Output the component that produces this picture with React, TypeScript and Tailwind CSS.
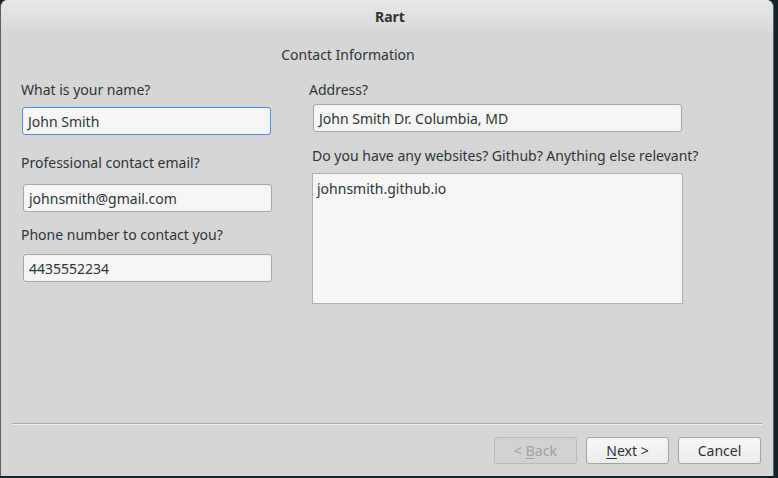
import React from "react"

const font = { fontFamily: '"Noto Sans", "DejaVu Sans", sans-serif' }

function Field({ value, focused, className }: { value: string; focused?: boolean; className: string }) {
  return (
    <div
      className={`h-[28px] flex items-center px-[5px] rounded-[3px] bg-[#f6f6f6] text-[14px] text-[#2e3436] border ${
        focused ? "border-[#4a90d9]" : "border-[#a6a6a6]"
      } ${className}`}
    >
      {value}
    </div>
  )
}

function Label({ children, className }: { children: React.ReactNode; className?: string }) {
  return <div className={`h-[16px] leading-[16px] text-[14px] text-[#2e3436] ${className ?? ""}`}>{children}</div>
}

export default function App() {
  return (
    <div className="w-[778px] h-[478px] bg-[#12242b] overflow-hidden" style={font}>
      <div className="w-[774px] h-[476px] bg-[#d6d6d6] border-l border-r border-[#5e5e5e] rounded-t-[7px] flex flex-col">
        <div className="h-[33px] rounded-t-[7px] bg-gradient-to-b from-[#e8e8e8] to-[#d8d8d8] flex items-center justify-center pl-[6px]">
          <span className="text-[14px] font-bold text-[#2e3436]">Rart</span>
        </div>

        <div className="w-[694px] text-center mt-[9px]">
          <span className="text-[14px] text-[#2e3436] leading-[16px]">Contact Information</span>
        </div>

        <div className="flex mt-[16px]">
          <div className="ml-[20px] w-[250px] flex flex-col">
            <Label>What is your name?</Label>
            <Field value="John Smith" focused className="mt-[9px] w-[249px] ml-[1px]" />
            <Label className="mt-[20px]">Professional contact email?</Label>
            <Field value="johnsmith@gmail.com" className="mt-[13px] w-[249px] ml-[2px]" />
            <Label className="mt-[15px]">Phone number to contact you?</Label>
            <Field value="4435552234" className="mt-[11px] w-[249px] ml-[2px]" />
          </div>

          <div className="ml-[38px] flex flex-col">
            <Label>Address?</Label>
            <Field value="John Smith Dr. Columbia, MD" className="mt-[6px] w-[369px] ml-[4px]" />
            <Label className="mt-[16px] ml-[3px]">Do you have any websites? Github? Anything else relevant?</Label>
            <div className="mt-[9px] ml-[3px] w-[371px] h-[131px] bg-[#f6f6f6] border border-[#b0b0b0] px-[4px] pt-[4px] text-[14px] text-[#2e3436]">
              johnsmith.github.io
            </div>
          </div>
        </div>

        <div className="flex-1" />

        <div className="mx-[11px] w-[750px] border-t border-[#a9a9a9] border-b border-b-[#f2f2f2]" />

        <div className="flex justify-end gap-[9px] mr-[12px] mt-[12px] mb-[12px]">
          <button className="w-[83px] h-[27px] rounded-[3px] border border-[#bababa] bg-[#d2d2d2] text-[14px] text-[#a0a0a0]">
            &lt; <span className="underline underline-offset-2">B</span>ack
          </button>
          <button className="w-[83px] h-[27px] rounded-[3px] border border-[#a4a4a4] bg-gradient-to-b from-[#f7f7f7] to-[#ececec] text-[14px] text-[#2e3436]">
            <span className="underline underline-offset-2">N</span>ext &gt;
          </button>
          <button className="w-[83px] h-[27px] rounded-[3px] border border-[#a4a4a4] bg-gradient-to-b from-[#f7f7f7] to-[#ececec] text-[14px] text-[#2e3436]">
            Cancel
          </button>
        </div>
      </div>
    </div>
  )
}
